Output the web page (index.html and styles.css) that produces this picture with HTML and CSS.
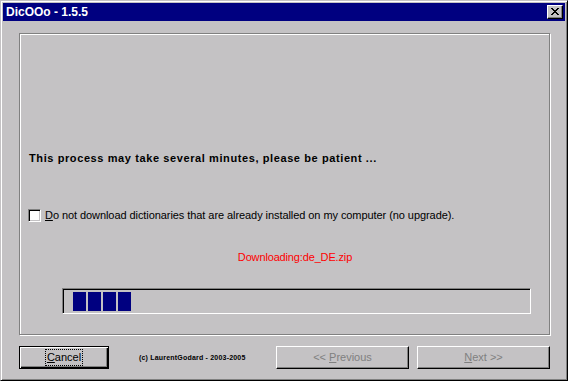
FILE: index.html
```html
<!DOCTYPE html>
<html lang="en">
<head>
    <meta charset="UTF-8">
    <title>DicOOo - 1.5.5</title>
    <link rel="stylesheet" href="styles.css">
</head>
<body>

    <div class="window">
        <div class="titlebar">
            <span class="title">DicOOo - 1.5.5</span>
            <button class="close">
                <svg width="8" height="7" viewBox="0 0 8 7" shape-rendering="crispEdges">
                    <path d="M0 0h2v1h-2zM6 0h2v1h-2zM1 1h2v1h-2zM5 1h2v1h-2zM2 2h4v1h-4zM3 3h2v1h-2zM2 4h4v1h-4zM1 5h2v1h-2zM5 5h2v1h-2zM0 6h2v1h-2zM6 6h2v1h-2z" fill="#000"/>
                </svg>
            </button>
        </div>

        <div class="client">
            <div class="group">
                <p class="notice">This process may take several minutes, please be patient ...</p>

                <label class="check">
                    <span class="box"></span>
                    <span><u>D</u>o not download dictionaries that are already installed on my computer (no upgrade).</span>
                </label>

                <p class="status">Downloading:de_DE.zip</p>

                <div class="progress">
                    <span class="chunk"></span>
                    <span class="chunk"></span>
                    <span class="chunk"></span>
                    <span class="chunk"></span>
                </div>
            </div>

            <div class="buttons">
                <button class="btn default"><span class="focus"><u>C</u>ancel</span></button>
                <span class="copy">(c) LaurentGodard - 2003-2005</span>
                <button class="btn prev" disabled>&lt;&lt; <u>P</u>revious</button>
                <button class="btn" disabled><u>N</u>ext &gt;&gt;</button>
            </div>
        </div>
    </div>

</body>
</html>
```

FILE: styles.css
```css
* {
    margin: 0;
    padding: 0;
    box-sizing: border-box;
}
body {
    font-family: "Liberation Sans", Arial, sans-serif;
    font-size: 11px;
    color: #000;
    background: #c4c2c4;
}
.window {
    width: 568px;
    height: 381px;
    background: #c4c2c4;
    border: 1px solid;
    border-color: #c4c2c4 #000 #000 #c4c2c4;
    box-shadow: inset 1px 1px 0 #fff, inset -1px -1px 0 #808080;
    padding: 2px;
}
.titlebar {
    height: 18px;
    background: #000080;
    display: flex;
    align-items: center;
    justify-content: space-between;
    padding: 0 2px 0 3px;
}
.title {
    color: #fff;
    font-weight: bold;
    font-size: 12px;
    line-height: 18px;
}
.close {
    width: 16px;
    height: 14px;
    background: #c4c2c4;
    border: 1px solid;
    border-color: #fff #000 #000 #fff;
    box-shadow: inset -1px -1px 0 #808080;
    display: flex;
    align-items: center;
    justify-content: center;
    padding: 0 0 1px 0;
}
.client {
    padding: 12px 0 0 16px;
}
.group {
    width: 531px;
    height: 302px;
    border: 1px solid #808080;
    box-shadow: 1px 1px 0 #fff, inset 1px 1px 0 #fff;
    padding-left: 9px;
    padding-top: 118px;
}
.notice {
    font-weight: bold;
    line-height: 13px;
    letter-spacing: 0.6px;
}
.check {
    display: flex;
    align-items: center;
    gap: 4px;
    height: 13px;
    margin-top: 44px;
    margin-left: -1px;
    line-height: 13px;
    letter-spacing: -0.07px;
}
.box {
    width: 13px;
    height: 13px;
    background: #fff;
    border: 1px solid;
    border-color: #808080 #fff #fff #808080;
    box-shadow: inset 1px 1px 0 #000, inset -1px -1px 0 #c4c2c4;
}
.status {
    margin-top: 29px;
    padding-left: 12px;
    text-align: center;
    color: #ff0000;
    line-height: 13px;
    letter-spacing: -0.15px;
}
.progress {
    display: flex;
    gap: 2px;
    width: 469px;
    height: 26px;
    margin: 24px 0 0 33px;
    padding: 3px 0 2px 10px;
    border: 1px solid;
    border-color: #808080 #fff #fff #808080;
    box-shadow: inset 1px 1px 0 #000;
}
.chunk {
    width: 13px;
    height: 19px;
    background: #000080;
}
.buttons {
    display: flex;
    align-items: center;
    width: 531px;
    margin-top: 11px;
}
.btn {
    width: 133px;
    height: 23px;
    font-family: "Liberation Sans", Arial, sans-serif;
    font-size: 11px;
    line-height: 13px;
    background: #c4c2c4;
    color: #000;
    border: 1px solid;
    border-color: #fff #000 #000 #fff;
    box-shadow: inset -1px -1px 0 #808080;
}
.btn:disabled {
    color: #808080;
}
.default {
    width: 90px;
    border: 1px solid #000;
    box-shadow: inset 1px 1px 0 #fff, inset -1px -1px 0 #000, inset -2px -2px 0 #808080;
}
.focus {
    display: inline-block;
    border: 1px dotted #000;
    padding: 1px 1px;
}
.copy {
    margin-left: 30px;
    font-size: 7px;
    font-weight: bold;
    letter-spacing: 0.2px;
}
.prev {
    margin-left: auto;
    margin-right: 8px;
}
```
